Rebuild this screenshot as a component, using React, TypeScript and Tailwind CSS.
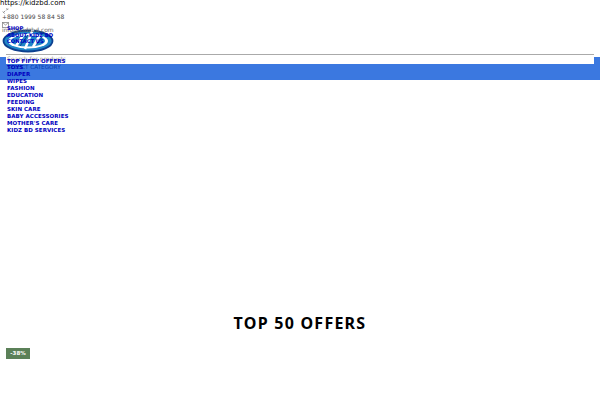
const menu = [
  "TOP FIFTY OFFERS",
  "TOYS",
  "DIAPER",
  "WIPES",
  "FASHION",
  "EDUCATION",
  "FEEDING",
  "SKIN CARE",
  "BABY ACCESSORIES",
  "MOTHER'S CARE",
  "KIDZ BD SERVICES",
];

function Logo() {
  return (
    <svg width="52" height="28" viewBox="0 0 52 28" fill="none" aria-hidden="true">
      <ellipse cx="26" cy="15" rx="24.5" ry="10.5" fill="#1f86c8" stroke="#0d3f8f" strokeWidth="1.8" />
      <ellipse cx="26" cy="15" rx="20" ry="7.5" fill="#ffffff" />
      <ellipse cx="26" cy="15" rx="17" ry="5.5" fill="#1f86c8" />
      <path d="M14 20 L22 8 M23 23 L31 3 M31 21 L38 9" stroke="#ffffff" strokeWidth="2.5" />
      <path d="M18 20 L26 9 M35 18 L40 11" stroke="#0d3f8f" strokeWidth="1" />
    </svg>
  );
}

export default function App() {
  return (
    <div className="relative flex h-[400px] w-[600px] flex-col overflow-hidden bg-white font-['DejaVu_Sans',sans-serif] text-[#333]">
      <header className="relative h-[57px] shrink-0">
        <div className="text-[7px] leading-[7px] text-black">https://kidzbd.com</div>
        <svg className="ml-[2px] mt-[1px]" width="7" height="6" viewBox="0 0 7 6" fill="none" stroke="#999" strokeWidth="1">
          <path d="M1 5 L3 3 M4 2.5 L6 0.5 M0.8 3.5 L2.5 5.5 M4.5 0.3 L6.2 2" />
        </svg>
        <div className="pl-[2px] text-[6px] leading-[6px] text-[#444]">+880 1999 58 84 58</div>
        <svg className="ml-[2px] mt-[2px]" width="7" height="6" viewBox="0 0 7 6" fill="none" stroke="#888" strokeWidth="0.8">
          <rect x="0.5" y="0.5" width="6" height="5" />
          <path d="M0.5 0.5 L3.5 3 L6.5 0.5" />
        </svg>
        <div className="relative z-10 mt-[-2px] pl-[2px] text-[6px] leading-[7px] text-[#666]">info@kidzbd.com</div>

        <div className="absolute left-[2px] top-[26px]">
          <Logo />
        </div>
        <div className="absolute left-[7px] top-[25px] z-20 text-[5.2px] font-bold leading-[6.7px] text-[#0000c0]">
          <div>SHOP</div>
          <div>ABOUT KIDZ BD</div>
          <div>CONTACT US</div>
        </div>
      </header>

      <div className="relative h-[23px] shrink-0 bg-[#3b78e0]">
        <div className="absolute left-[6px] top-[-3px] h-[10px] w-[588px] border-t border-t-[#aaa] bg-white pl-[1px] text-[6px] leading-[7px] text-[#999]">
          Search for products
        </div>
        <div className="absolute left-[7px] top-[7px] text-[5.7px] leading-[7px] text-[#0b3fb0]">SELECT CATEGORY</div>
        <ul className="absolute left-[7px] top-[0.5px] text-[5.5px] font-bold leading-[6.9px] tracking-[0.05px] text-[#0000c0]">
          {menu.map((item) => (
            <li key={item}>{item}</li>
          ))}
        </ul>
      </div>

      <main className="flex flex-col pt-[234px]">
        <h2 className="text-center font-['Noto_Sans',sans-serif] text-[16px] font-bold leading-[18px] tracking-[1.25px] text-black">
          TOP 50 OFFERS
        </h2>
        <div className="ml-[6px] mt-[16px] flex h-[11px] w-[24px] items-center justify-center bg-[#5b8058] text-[5.5px] font-bold text-white">
          -38%
        </div>
      </main>
    </div>
  );
}
